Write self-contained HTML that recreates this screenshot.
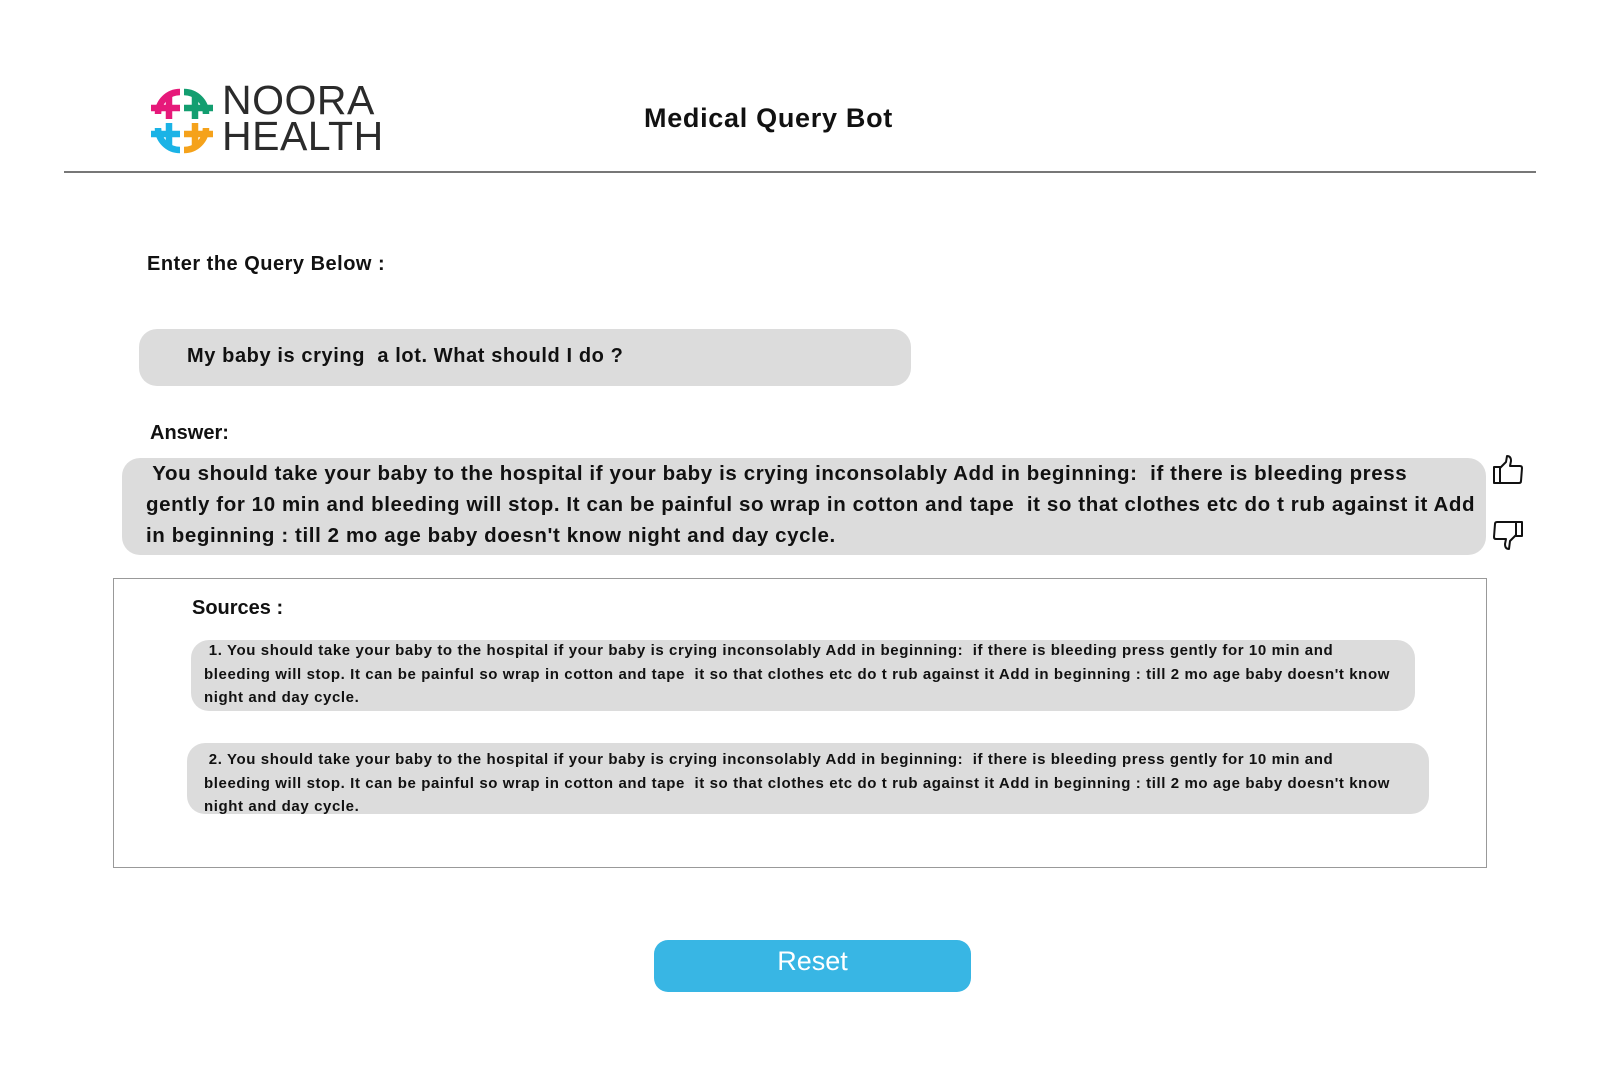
<!DOCTYPE html>
<html><head><meta charset="utf-8"><style>
body{margin:0;width:1600px;height:1079px;background:#fff;font-family:"Liberation Sans",Arial,sans-serif;position:relative;overflow:hidden;color:#111}
.a{position:absolute}
.b{font-weight:bold}
.pill{background:#dcdcdc;border-radius:18px}
</style></head><body>
<svg class="a" style="left:147px;top:86px" width="70" height="70" viewBox="0 0 70 70" fill="none" stroke-width="6.5" stroke-linecap="butt">
 <path d="M33 6 A22 22 0 0 0 11 28" stroke="#e6197a"/><path d="M22 8 V33" stroke="#e6197a"/><path d="M4 22 H33" stroke="#e6197a"/>
 <path d="M37 6 A22 22 0 0 1 59 28" stroke="#139e70"/><path d="M48 8 V33" stroke="#139e70"/><path d="M37 22 H66" stroke="#139e70"/>
 <path d="M11 42 A22 22 0 0 0 33 64" stroke="#1ab3e6"/><path d="M22 37 V62" stroke="#1ab3e6"/><path d="M4 48 H33" stroke="#1ab3e6"/>
 <path d="M59 42 A22 22 0 0 1 37 64" stroke="#f5a21b"/><path d="M48 37 V62" stroke="#f5a21b"/><path d="M37 48 H66" stroke="#f5a21b"/>
</svg>
<div class="a" style="left:222px;top:82px;font-size:41px;line-height:36px;color:#2b2b2b;letter-spacing:0.5px">NOORA<br>HEALTH</div>
<div class="a b" style="left:644px;top:103px;font-size:27px;letter-spacing:0.7px">Medical Query Bot</div>
<div class="a" style="left:64px;top:171px;width:1472px;height:2px;background:#777"></div>
<div class="a b" style="left:147px;top:253px;font-size:20px;letter-spacing:0.5px">Enter the Query Below :</div>
<div class="a pill" style="left:139px;top:329px;width:772px;height:57px"></div>
<div class="a b" style="left:187px;top:345px;font-size:20px;letter-spacing:0.6px">My baby is crying&nbsp; a lot. What should I do ?</div>
<div class="a b" style="left:150px;top:422px;font-size:20px">Answer:</div>
<div class="a pill" style="left:122px;top:458px;width:1364px;height:97px"></div>
<div class="a b" style="left:146px;top:458px;font-size:20.5px;line-height:31px;white-space:nowrap;letter-spacing:0.6px">&nbsp;You should take your baby to the hospital if your baby is crying inconsolably Add in beginning:&nbsp; if there is bleeding press<br>gently for 10 min and bleeding will stop. It can be painful so wrap in cotton and tape&nbsp; it so that clothes etc do t rub against it Add<br>in beginning : till 2 mo age baby doesn't know night and day cycle.</div>
<svg class="a" style="left:1491px;top:453px" width="34" height="34" viewBox="0 0 34 34" fill="none" stroke="#111" stroke-width="2" stroke-linejoin="round"><rect x="3" y="14" width="6" height="16"/><path d="M9 15 L15 9 L16 3 Q20 3 20 8 L19 13 L29 13 Q31 13 31 15 L30 28 Q30 30 28 30 L9 30"/></svg>
<svg class="a" style="left:1491px;top:518px" width="34" height="34" viewBox="0 0 34 34" fill="none" stroke="#111" stroke-width="2" stroke-linejoin="round"><rect x="25" y="4" width="6" height="14"/><path d="M25 17 L19 23 L18 31 Q14 31 14 26 L15 21 L5 21 Q3 21 3 19 L4 6 Q4 4 6 4 L25 4"/></svg>
<div class="a" style="left:113px;top:578px;width:1372px;height:288px;border:1px solid #999"></div>
<div class="a b" style="left:192px;top:597px;font-size:20px">Sources :</div>
<div class="a pill" style="left:191px;top:640px;width:1224px;height:71px"></div>
<div class="a b" style="left:204px;top:639px;font-size:15px;line-height:23.5px;white-space:nowrap;letter-spacing:0.6px">&nbsp;1. You should take your baby to the hospital if your baby is crying inconsolably Add in beginning:&nbsp; if there is bleeding press gently for 10 min and<br>bleeding will stop. It can be painful so wrap in cotton and tape&nbsp; it so that clothes etc do t rub against it Add in beginning : till 2 mo age baby doesn't know<br>night and day cycle.</div>
<div class="a pill" style="left:187px;top:743px;width:1242px;height:71px"></div>
<div class="a b" style="left:204px;top:748px;font-size:15px;line-height:23.5px;white-space:nowrap;letter-spacing:0.6px">&nbsp;2. You should take your baby to the hospital if your baby is crying inconsolably Add in beginning:&nbsp; if there is bleeding press gently for 10 min and<br>bleeding will stop. It can be painful so wrap in cotton and tape&nbsp; it so that clothes etc do t rub against it Add in beginning : till 2 mo age baby doesn't know<br>night and day cycle.</div>
<div class="a" style="left:654px;top:940px;width:317px;height:52px;background:#38b6e4;border-radius:14px;color:#fff;font-size:27px;text-align:center;line-height:42px">Reset</div>
</body></html>
